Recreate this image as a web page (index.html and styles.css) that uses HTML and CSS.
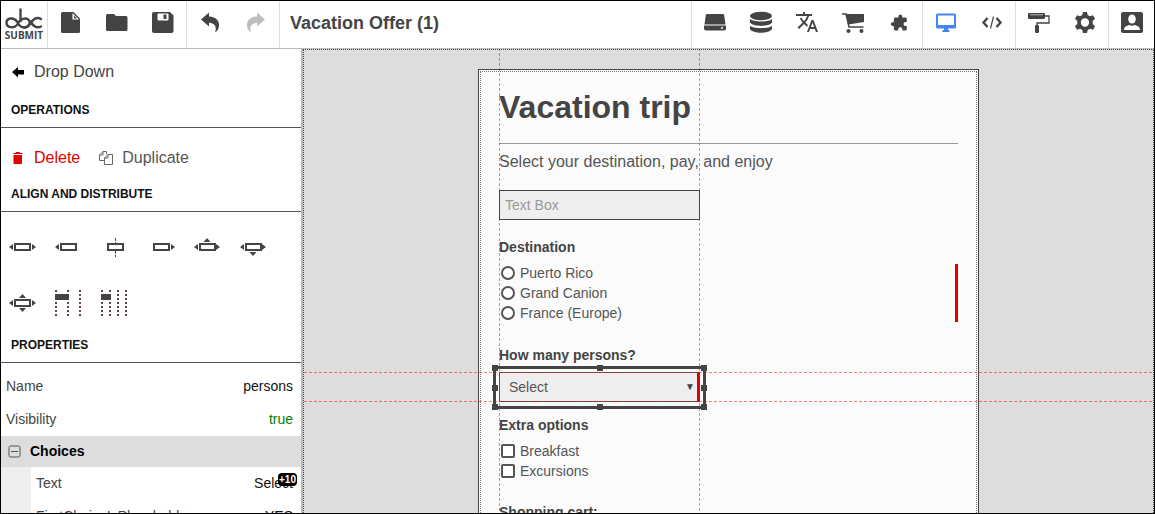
FILE: index.html
```html
<!DOCTYPE html>
<html lang="en">

<head>
	<meta charset="UTF-8">
	<title>Vacation Offer (1)</title>
	<link rel="stylesheet" href="styles.css">
</head>

<body>
	<!-- top toolbar -->
	<header class="toolbar">
		<a class="logo" href="#" aria-label="abc submit">
			<svg width="38" height="22" viewBox="0 0 38 22" fill="none" stroke="#444" stroke-width="2.4" stroke-linecap="round" stroke-linejoin="round">
				<path d="M12 17C9 20.500 1.500 20 1.500 14.800C1.500 9.500 9 9 12 13.500C14 17 15.500 19.500 19.500 19.500C26 19.500 26.500 10.500 20.500 10.500C16.500 10.500 14 13 12 17" />
				<path d="M15.500 1.500V13" />
				<path d="M36 11C32 8.500 28.500 11 26 14.500C24 17.500 21.500 19.500 19 19.500M26 13.500C28 18.500 32 20.500 36 18.500" />
			</svg>
			<span>SUBMIT</span>
		</a>
		<div class="group">
			<button type="button" aria-label="New">
				<svg viewBox="0 0 24 24"><path d="M3.500 2H14.500L21 8.500V21.500Q21 23 19.500 23H3.500Q2 23 2 21.500V3.500Q2 2 3.500 2Z" /><path d="M13.500 3L20 9.500H13.500Z" fill="#fff" /><path d="M15 5.500L18 8.500H15Z" /></svg>
			</button>
			<button type="button" aria-label="Open">
				<svg viewBox="0 0 24 24"><path d="M2.500 4H9L11 6H21Q22.500 6 22.500 7.500V19.500Q22.500 21 21 21H2.500Q1 21 1 19.500V5.500Q1 4 2.500 4Z" /></svg>
			</button>
			<button type="button" aria-label="Save">
				<svg viewBox="0 0 24 24"><path d="M3 2H19L22.500 5.500V21Q22.500 23 20.500 23H3Q1 23 1 21V4Q1 2 3 2Z" /><rect x="6.500" y="3.500" width="11" height="7" rx="1" fill="#fff" /><rect x="12.500" y="4.500" width="3" height="4.500" /></svg>
			</button>
		</div>
		<div class="group">
			<button type="button" aria-label="Undo">
				<svg viewBox="0 0 24 24"><path d="M3 9.500L11 2.500V6.500C18 7 21.500 10.500 21 16C20.800 18.500 19.500 21 17 22.500C19 17.500 17 13 11 12.800V16.500Z" /></svg>
			</button>
			<button type="button" aria-label="Redo" disabled>
				<svg viewBox="0 0 24 24"><path d="M21 9.500L13 2.500V6.500C6 7 2.500 10.500 3 16C3.200 18.500 4.500 21 7 22.500C5 17.500 7 13 13 12.800V16.500Z" /></svg>
			</button>
		</div>
		<h2 class="title">Vacation Offer (1)</h2>
		<div class="group">
			<button type="button" aria-label="Storage">
				<svg viewBox="0 0 24 24"><path d="M4 4H20Q21 4 21.200 5L22.500 14.500H1.500L2.800 5Q3 4 4 4Z" /><path d="M1 15.500H23V18.500Q23 20.500 21 20.500H3Q1 20.500 1 18.500Z" /><circle cx="19" cy="18" r="1" fill="#fff" /></svg>
			</button>
			<button type="button" aria-label="Database">
				<svg viewBox="0 0 24 24"><ellipse cx="12" cy="6" rx="11" ry="4.200" /><path d="M1 9C4 12.300 20 12.300 23 9V12.500C20 17 4 17 1 12.500Z" /><path d="M1 15.800C4 19 20 19 23 15.800V19C20 24 4 24 1 19Z" /></svg>
			</button>
			<button type="button" aria-label="Translate">
				<svg viewBox="0 0 24 24"><path d="M12.870 15.070l-2.540-2.510.03-.03c1.740-1.940 2.980-4.170 3.710-6.530H17V4h-7V2H8v2H1v1.990h11.170C11.500 7.920 10.440 9.750 9 11.350 8.070 10.320 7.300 9.190 6.690 8h-2c.73 1.630 1.730 3.170 2.980 4.560l-5.090 5.020L4 19l5-5 3.110 3.110.76-2.040zM18.500 10h-2L12 22h2l1.120-3h4.750L21 22h2l-4.500-12zm-2.620 7l1.620-4.330L19.120 17h-3.240z" /></svg>
			</button>
			<button type="button" aria-label="Shop">
				<svg viewBox="0 0 24 24"><path d="M5 4H23V12L7.500 14.500Z" /><path d="M1 4H5L8 17H22.500" fill="none" stroke="#444" stroke-width="1.500" /><circle cx="7.500" cy="21" r="2" /><circle cx="20.500" cy="21" r="2" /></svg>
			</button>
			<button type="button" aria-label="Plugins">
				<svg viewBox="0 0 24 24"><path transform="matrix(-.76 0 0 .76 21.300 3.800)" d="M20.500 11H19V7c0-1.100-.9-2-2-2h-4V3.500C13 2.120 11.880 1 10.500 1S8 2.120 8 3.500V5H4c-1.100 0-1.990.9-1.990 2v3.800H3.500c1.490 0 2.700 1.210 2.700 2.700s-1.210 2.700-2.700 2.700H2V20c0 1.100.9 2 2 2h3.800v-1.500c0-1.490 1.210-2.700 2.700-2.700 1.490 0 2.700 1.210 2.700 2.700V22H17c1.100 0 2-.9 2-2v-4h1.500c1.380 0 2.500-1.120 2.500-2.500S21.880 11 20.500 11z" /></svg>
			</button>
		</div>
		<div class="group">
			<button type="button" aria-label="Desktop view" class="on">
				<svg viewBox="0 0 24 24"><path fill-rule="evenodd" d="M3.500 3.500H20.500Q22 3.500 22 5V17Q22 18.500 20.500 18.500H14V20H15.500V22H8.500V20H10V18.500H3.500Q2 18.500 2 17V5Q2 3.500 3.500 3.500ZM4 5.500V15H20V5.500Z" /></svg>
			</button>
			<button type="button" aria-label="Source">
				<svg viewBox="0 0 24 24" class="line"><path d="M7.500 8L3.500 12.500L7.500 17M16.500 8L20.500 12.500L16.500 17" stroke-width="2.400" /><path d="M13.500 6.500L10.500 18.500" stroke-width="1.200" /></svg>
			</button>
		</div>
		<div class="group">
			<button type="button" aria-label="Theme">
				<svg viewBox="0 0 24 24"><rect x="1" y="3" width="17" height="6" rx="1" /><path d="M3 4.800H16" stroke="#bbb" /><path d="M18 6H22V13H10V16" fill="none" stroke="#444" stroke-width="1.300" /><rect x="8" y="15" width="4" height="8" rx="1" /></svg>
			</button>
			<button type="button" aria-label="Settings">
				<svg viewBox="0 0 24 24"><path fill-rule="evenodd" d="M10 2H14L14.700 5L17 6.300L20 5.200L22 8.800L19.700 11V14L22 16.200L20 19.800L17 18.700L14.700 20L14 23H10L9.300 20L7 18.700L4 19.800L2 16.200L4.300 14V11L2 8.800L4 5.200L7 6.300L9.300 5ZM12 8.300A4.200 4.200 0 1 0 12 16.700A4.200 4.200 0 1 0 12 8.300Z" /></svg>
			</button>
		</div>
		<div class="group">
			<button type="button" aria-label="Account">
				<svg viewBox="0 0 24 24"><rect x="1" y="2" width="22" height="21" rx="2" /><ellipse cx="12" cy="9" rx="3.800" ry="4.500" fill="#fff" /><path d="M4 20C4 16.500 7 15.800 9.500 15Q12 16.500 14.500 15C17 15.800 20 16.500 20 20Z" fill="#fff" /></svg>
			</button>
		</div>
	</header>

	<div class="main">
		<!-- left panel -->
		<aside class="sidebar">
			<div class="back">
				<button type="button" class="action">
					<svg width="14" height="14" viewBox="0 0 14 14"><path d="M1 7L7 2V5H13V9.500H7V12.500Z" fill="#000" /></svg>
					Drop Down
				</button>
			</div>
			<h3>OPERATIONS</h3>
			<div class="operations">
				<button type="button" class="action delete">
					<svg width="14" height="14" viewBox="0 0 14 14"><path d="M2 2H4.500L5 1H8.500L9 2H11.500V3H2ZM2.500 4H11V12Q11 13 10 13H3.500Q2.500 13 2.500 12Z" fill="#e00000" /></svg>
					Delete
				</button>
				<button type="button" class="action duplicate">
					<svg width="16" height="16" viewBox="0 0 16 16" fill="none" stroke="#666"><path d="M6.500 10.500H1.500V5L5 1.500H8.500V4M5 1.500V5H1.500M10 4.500H14.500V14.500H6.500V8L10 4.500V8H6.500" /></svg>
					Duplicate
				</button>
			</div>
			<h3>ALIGN AND DISTRIBUTE</h3>
			<div class="align">
				<button type="button" aria-label="Align horizontally">
					<svg viewBox="0 0 32 28"><rect x="8" y="11" width="15" height="6" class="box" /><path d="M2 14L6 11V17ZM29 14L25 11V17Z" /></svg>
				</button>
				<button type="button" aria-label="Align left">
					<svg viewBox="0 0 32 28"><rect x="8" y="11" width="15" height="6" class="box" /><path d="M2 14L6 11V17Z" /></svg>
				</button>
				<button type="button" aria-label="Align center">
					<svg viewBox="0 0 32 28"><rect x="9" y="11" width="15" height="6" class="box" /><path d="M16.500 5V10M16.500 18V24" stroke="#444" stroke-dasharray="3 1" /></svg>
				</button>
				<button type="button" aria-label="Align right">
					<svg viewBox="0 0 32 28"><rect x="9" y="11" width="15" height="6" class="box" /><path d="M30 14L26 11V17Z" /></svg>
				</button>
				<button type="button" aria-label="Align top">
					<svg viewBox="0 0 32 28"><rect x="9" y="11" width="15" height="6" class="box" /><path d="M3 14L7 11V17ZM29 14L25 11V17ZM16 5L19.500 9H12.500Z" /></svg>
				</button>
				<button type="button" aria-label="Align bottom">
					<svg viewBox="0 0 32 28"><rect x="9" y="11" width="15" height="6" class="box" /><path d="M3 14L7 11V17ZM29 14L25 11V17ZM16 23L19.500 19H12.500Z" /></svg>
				</button>
				<button type="button" aria-label="Align middle">
					<svg viewBox="0 0 32 28"><rect x="8" y="11" width="15" height="6" class="box" /><path d="M2 14L6 11V17ZM29 14L25 11V17ZM15.500 5L19 9H12ZM15.500 23L19 19H12Z" /></svg>
				</button>
				<button type="button" aria-label="Three columns">
					<svg viewBox="0 0 32 28"><path d="M3 1V28M15 1V28M27 1V28" stroke="#643f54" stroke-width="2" stroke-dasharray="2 2" /><rect x="1" y="4" width="16" height="8" fill="#fff" /><rect x="2" y="5" width="14" height="6" /></svg>
				</button>
				<button type="button" aria-label="Four columns">
					<svg viewBox="0 0 32 28"><path d="M3 1V28M11 1V28M19 1V28M27 1V28" stroke="#643f54" stroke-width="2" stroke-dasharray="2 2" /><rect x="1" y="4" width="12" height="8" fill="#fff" /><rect x="2" y="5" width="10" height="6" /></svg>
				</button>
			</div>
			<h3>PROPERTIES</h3>
			<dl class="props">
				<div class="row">
					<dt>Name</dt>
					<dd>persons</dd>
				</div>
				<div class="row">
					<dt>Visibility</dt>
					<dd class="true">true</dd>
				</div>
			</dl>
			<button type="button" class="section">
				<svg width="13" height="13" viewBox="0 0 13 13" fill="none" stroke="#555"><rect x="1" y="1" width="11" height="11" rx="1.500" /><path d="M3 6.500H10" /></svg>
				Choices
			</button>
			<dl class="props sub">
				<div class="row">
					<dt>Text</dt>
					<dd>Select<span class="badge">+10</span></dd>
				</div>
				<div class="row">
					<dt>FirstChoiceIsPlaceholder</dt>
					<dd>YES</dd>
				</div>
			</dl>
		</aside>

		<!-- form canvas -->
		<main class="canvas">
			<form class="sheet">
				<h1>Vacation trip</h1>
				<p>Select your destination, pay, and enjoy</p>
				<input type="text" class="text-box" placeholder="Text Box" aria-label="Text Box">
				<fieldset>
					<legend>Destination</legend>
					<div class="options required">
						<label><input type="radio" name="destination">Puerto Rico</label>
						<label><input type="radio" name="destination">Grand Canion</label>
						<label><input type="radio" name="destination">France (Europe)</label>
					</div>
				</fieldset>
				<label class="label persons-label" for="persons">How many persons?</label>
				<div class="selected">
					<select id="persons">
						<option>Select</option>
					</select>
					<!-- guide lines -->
					<i class="guide top"></i>
					<i class="guide bottom"></i>
					<i class="guide left"></i>
					<i class="guide right"></i>
					<!-- resize frame -->
					<div class="frame">
						<i class="tl"></i><i class="tc"></i><i class="tr"></i>
						<i class="ml"></i><i class="mr"></i>
						<i class="bl"></i><i class="bc"></i><i class="br"></i>
					</div>
				</div>
				<fieldset class="extra">
					<legend>Extra options</legend>
					<div class="options">
						<label><input type="checkbox">Breakfast</label>
						<label><input type="checkbox">Excursions</label>
					</div>
				</fieldset>
				<div class="label cart-label">Shopping cart:</div>
			</form>
		</main>
	</div>
</body>

</html>
```
FILE: styles.css
```css
* {
	margin: 0;
	padding: 0;
	box-sizing: border-box;
}
body {
	display: flex;
	flex-direction: column;
	height: 100vh;
	overflow: hidden;
	border: 1px solid #000;
	font-family: "Liberation Sans", Arial, sans-serif;
	font-size: 14px;
	color: #444;
	background-color: #fff;
}
button {
	border: 0;
	background: none;
	font: inherit;
	color: inherit;
	cursor: pointer;
}
svg {
	display: block;
	flex: none;
}

/* toolbar */
.toolbar {
	display: flex;
	flex: none;
	height: 48px;
	border-bottom: 1px solid #bbb;
}
.logo {
	display: flex;
	flex-direction: column;
	align-items: center;
	width: 46px;
	padding-top: 7px;
	font: bold 10px/10px "Open Sans", sans-serif;
	color: #444;
	text-decoration: none;
}
.group {
	display: flex;
	border-left: 1px solid #ddd;
}
.group button {
	display: flex;
	justify-content: center;
	width: 46px;
	padding-top: 9px;
}
.group:last-child button {
	width: 45px;
}
.group svg {
	width: 24px;
	height: 24px;
	fill: #444;
}
.group .line {
	fill: none;
	stroke: #444;
}
.group .on svg {
	fill: #4285f4;
}
.group button:disabled {
	opacity: .35;
}
.title {
	flex: 1;
	padding-left: 10px;
	border-left: 1px solid #ddd;
	font-size: 18px;
	line-height: 44px;
}

.main {
	display: flex;
	flex: 1;
	min-height: 0;
}

/* left panel */
.sidebar {
	flex: none;
	width: 302px;
	overflow: hidden;
	border-right: 2px solid #bbb;
}
.back {
	padding: 13px 10px 7px;
}
.action {
	display: flex;
	align-items: center;
	gap: 9px;
	font-size: 16px;
	line-height: 20px;
}
.delete {
	color: #e00000;
}
.duplicate {
	gap: 8px;
	color: #555;
}
.sidebar h3 {
	padding: 12px 10px 8px;
	border-bottom: 1px solid #555;
	font-size: 12px;
	line-height: 18px;
	color: #111;
}
.operations {
	display: flex;
	gap: 18px;
	padding: 20px 10px 5px;
}
.align {
	display: flex;
	flex-wrap: wrap;
	row-gap: 13px;
	padding-top: 13px;
}
.align button {
	display: flex;
	align-items: center;
	justify-content: center;
	width: 46px;
	height: 43px;
	padding-right: 2px;
}
.align svg {
	width: 32px;
	height: 28px;
	fill: #444;
}
.align .box {
	fill: #fff;
	stroke: #444;
	stroke-width: 2;
}
.props {
	padding-top: 7px;
}
.row {
	display: flex;
	justify-content: space-between;
	padding: 0 8px 0 5px;
	line-height: 33px;
}
.row dd {
	position: relative;
	color: #111;
}
.row .true {
	color: green;
}
.section {
	display: flex;
	align-items: center;
	gap: 9px;
	width: 100%;
	padding: 0 7px;
	background-color: #ddd;
	font-weight: bold;
	line-height: 31px;
	color: #000;
}
.sub {
	padding-top: 0;
	border-left: 30px solid #eee;
}
.badge {
	position: absolute;
	top: 6px;
	right: -4px;
	padding: 0 1px;
	border-radius: 4px;
	background-color: #000;
	font: bold 10px/13px "Liberation Sans", Arial, sans-serif;
	color: #fff;
}

/* canvas */
.canvas {
	flex: 1;
	padding: 19px 20px 0;
	overflow: hidden;
	border: 1px dotted #444;
	border-bottom: 0;
	background-color: #ddd;
}
.sheet {
	max-width: 501px;
	min-height: 100vh;
	margin: 0 auto;
	padding: 0 20px;
	border: 1px solid #444;
	outline: 1px dotted #777;
	outline-offset: -3px;
	background-color: #fbfbfb;
}
.sheet h1 {
	padding: 18px 0 17px;
	border-bottom: 1px solid #999;
	font-size: 32px;
	line-height: 38px;
}
.sheet p {
	margin: 8px 0 18px;
	font-size: 16px;
	line-height: 20px;
	color: #555;
}
.text-box {
	display: block;
	width: 201px;
	height: 30px;
	padding: 0 5px;
	border: 1px solid #444;
	background-color: #eee;
	font: inherit;
}
.text-box::placeholder {
	color: #999;
}
fieldset {
	margin-top: 17px;
	border: 0;
}
legend,
.label {
	display: block;
	margin-bottom: 7px;
	font-weight: bold;
	line-height: 20px;
}
.options {
	display: flex;
	flex-direction: column;
	gap: 2px;
}
.required {
	border-right: 3px solid #e00000;
}
.options label {
	display: flex;
	align-items: center;
	gap: 5px;
	padding-left: 2px;
	line-height: 18px;
	color: #555;
}
.options input {
	width: 14px;
	height: 14px;
	border: 2px solid #555;
	border-radius: 2px;
	background-color: #fff;
	appearance: none;
}
.options input[type="radio"] {
	border-radius: 50%;
}
.persons-label {
	margin-top: 23px;
}
.cart-label {
	margin-top: 22px;
}
.extra {
	margin-top: 13px;
}

/* selected control */
.selected {
	position: relative;
	width: 201px;
}
.selected::after {
	content: "▼";
	position: absolute;
	top: 0;
	right: 5px;
	font-size: 10px;
	line-height: 30px;
}
.selected select {
	display: block;
	width: 100%;
	height: 30px;
	padding: 0 9px;
	border: 1px solid #555;
	border-right: 3px solid #e00000;
	border-radius: 0;
	background-color: #eee;
	font: inherit;
	color: #555;
	appearance: none;
}
.guide {
	position: absolute;
	pointer-events: none;
}
.guide.top,
.guide.bottom {
	left: -100vw;
	width: 200vw;
	height: 1px;
	background: repeating-linear-gradient(to right, rgba(255, 0, 0, .5) 0 3px, transparent 3px 5px);
}
.guide.top {
	top: 0;
}
.guide.bottom {
	bottom: 0;
}
.guide.left,
.guide.right {
	top: -100vh;
	width: 1px;
	height: 200vh;
	background: repeating-linear-gradient(to bottom, rgba(255, 0, 0, .5) 0 3px, transparent 3px 5px);
}
.guide.left {
	left: 0;
}
.guide.right {
	right: 0;
}
.frame {
	position: absolute;
	inset: -6px -6px -7px;
	border: 3px solid #444;
	pointer-events: none;
}
.frame i {
	position: absolute;
	width: 6px;
	height: 6px;
	background-color: #444;
}
.frame .tl,
.frame .tc,
.frame .tr {
	top: -4px;
}
.frame .bl,
.frame .bc,
.frame .br {
	bottom: -4px;
}
.frame .tl,
.frame .ml,
.frame .bl {
	left: -4px;
}
.frame .tr,
.frame .mr,
.frame .br {
	right: -4px;
}
.frame .tc,
.frame .bc {
	left: calc(50% - 3px);
}
.frame .ml,
.frame .mr {
	top: calc(50% - 3px);
}
```
